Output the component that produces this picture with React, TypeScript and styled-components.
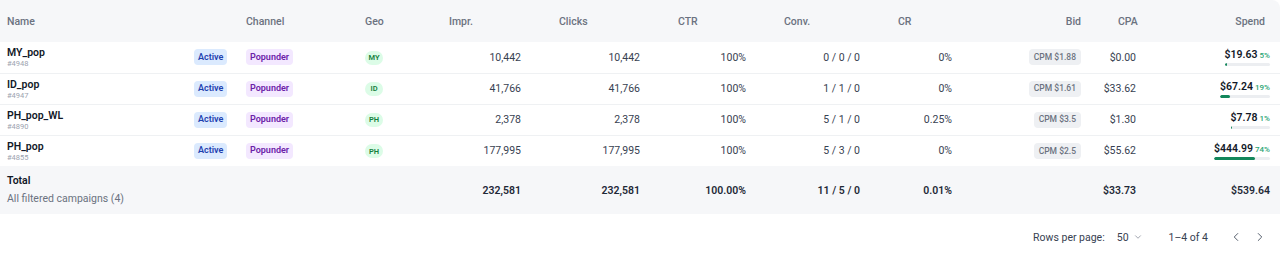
import React from "react";
import styled, { createGlobalStyle } from "styled-components";
import { ChevronDown, ChevronLeft, ChevronRight } from "lucide-react";

const Global = createGlobalStyle`
  html, body { margin: 0; padding: 0; background: #ffffff; }
  body { font-family: Roboto, "Noto Sans", Arial, sans-serif; color: #1f2937; }
  * { box-sizing: border-box; }
`;

const Card = styled.div`
  width: 1280px;
  background: #ffffff;
  border-top-right-radius: 8px;
  overflow: hidden;
`;

const Table = styled.table`
  width: 1280px;
  table-layout: fixed;
  border-collapse: collapse;
`;

const HeadRow = styled.tr`
  height: 42px;
  background: #f6f7f9;
`;

const Th = styled.th<{ $align?: string; $pl?: number; $pr?: number }>`
  text-align: ${(p) => p.$align || "left"};
  padding: 0 ${(p) => p.$pr ?? 19}px 0 ${(p) => p.$pl ?? 19}px;
  font-size: 10.5px;
  font-weight: 500;
  color: #6b7280;
  white-space: nowrap;
`;

const BodyRow = styled.tr`
  height: 31px;
  border-bottom: 1px solid #eff1f3;
  &:last-child { border-bottom: none; }
`;

const Td = styled.td<{ $align?: string; $pl?: number; $pr?: number; $bold?: boolean }>`
  text-align: ${(p) => p.$align || "right"};
  padding: 0 ${(p) => p.$pr ?? 19}px 0 ${(p) => p.$pl ?? 19}px;
  font-size: 10.5px;
  font-weight: ${(p) => (p.$bold ? 600 : 400)};
  color: ${(p) => (p.$bold ? "#1f2937" : "#374151")};
  white-space: nowrap;
  vertical-align: middle;
`;

const NameText = styled.div`
  font-size: 10.5px;
  font-weight: 600;
  color: #111827;
  line-height: 12px;
  margin-top: 1px;
`;

const IdText = styled.div`
  font-size: 7.5px;
  color: #9ca3af;
  line-height: 9px;
`;

const Badge = styled.span<{ $bg: string; $fg: string; $size?: number; $weight?: number; $px?: number }>`
  display: inline-flex;
  align-items: center;
  height: 16px;
  padding: 0 ${(p) => p.$px ?? 4}px;
  border-radius: 4px;
  background: ${(p) => p.$bg};
  color: ${(p) => p.$fg};
  font-size: ${(p) => p.$size ?? 9}px;
  font-weight: ${(p) => p.$weight ?? 600};
  line-height: 1;
`;

const GeoBadge = styled.span`
  display: inline-flex;
  align-items: center;
  justify-content: center;
  min-width: 18px;
  height: 14px;
  padding: 0 3px;
  border-radius: 7px;
  background: #dcfce7;
  color: #16803d;
  font-size: 7.5px;
  font-weight: 600;
`;

const SpendBox = styled.div`
  display: inline-flex;
  flex-direction: column;
  align-items: stretch;
  gap: 2px;
  vertical-align: middle;
`;

const SpendLine = styled.div`
  display: flex;
  align-items: baseline;
  justify-content: flex-end;
  gap: 2px;
`;

const SpendValue = styled.span`
  font-size: 10.5px;
  font-weight: 600;
  color: #111827;
`;

const SpendPct = styled.span`
  font-size: 8px;
  font-weight: 500;
  color: #2aa574;
`;

const Track = styled.div`
  height: 3px;
  border-radius: 2px;
  background: #eceef1;
  overflow: hidden;
`;

const Fill = styled.div`
  height: 100%;
  border-radius: 2px;
  background: #13875b;
`;

const TotalRow = styled.tr`
  height: 48px;
  background: #f6f7f9;
`;

const TotalTitle = styled.div`
  font-size: 10.5px;
  font-weight: 600;
  color: #111827;
  line-height: 14px;
`;

const TotalSub = styled.div`
  font-size: 10.5px;
  color: #6b7280;
  line-height: 16px;
  margin-top: 3px;
`;

const Footer = styled.div`
  height: 46px;
  display: flex;
  align-items: center;
  justify-content: flex-end;
  padding-right: 13px;
  font-size: 10.5px;
  color: #374151;
`;

const Select = styled.div`
  display: flex;
  align-items: center;
  gap: 4px;
  margin-left: 12px;
  color: #374151;
`;

const Range = styled.span`
  margin-left: 26px;
`;

const IconBtn = styled.button`
  border: none;
  background: transparent;
  padding: 0;
  display: flex;
  align-items: center;
  color: #4b5563;
  margin-left: 10px;
  width: 14px;
  cursor: pointer;
  &:first-of-type { margin-left: 21px; }
`;

type Row = {
  name: string;
  id: string;
  geo: string;
  impr: string;
  clicks: string;
  ctr: string;
  conv: string;
  cr: string;
  bid: string;
  cpa: string;
  spend: string;
  pct: number;
};

const rows: Row[] = [
  { name: "MY_pop", id: "#4948", geo: "MY", impr: "10,442", clicks: "10,442", ctr: "100%", conv: "0 / 0 / 0", cr: "0%", bid: "CPM $1.88", cpa: "$0.00", spend: "$19.63", pct: 5 },
  { name: "ID_pop", id: "#4947", geo: "ID", impr: "41,766", clicks: "41,766", ctr: "100%", conv: "1 / 1 / 0", cr: "0%", bid: "CPM $1.61", cpa: "$33.62", spend: "$67.24", pct: 19 },
  { name: "PH_pop_WL", id: "#4890", geo: "PH", impr: "2,378", clicks: "2,378", ctr: "100%", conv: "5 / 1 / 0", cr: "0.25%", bid: "CPM $3.5", cpa: "$1.30", spend: "$7.78", pct: 1 },
  { name: "PH_pop", id: "#4855", geo: "PH", impr: "177,995", clicks: "177,995", ctr: "100%", conv: "5 / 3 / 0", cr: "0%", bid: "CPM $2.5", cpa: "$55.62", spend: "$444.99", pct: 74 },
];

const widths = [187, 52, 119, 72, 110, 119, 106, 114, 92, 129, 55, 125];

export default function App() {
  return (
    <>
      <Global />
      <Card>
        <Table>
          <colgroup>
            {widths.map((w, i) => (
              <col key={i} style={{ width: w }} />
            ))}
          </colgroup>
          <thead>
            <HeadRow>
              <Th $pl={7}>Name</Th>
              <Th $pl={7}></Th>
              <Th $pl={7}>Channel</Th>
              <Th $pl={7}>Geo</Th>
              <Th>Impr.</Th>
              <Th>Clicks</Th>
              <Th>CTR</Th>
              <Th>Conv.</Th>
              <Th>CR</Th>
              <Th $align="right">Bid</Th>
              <Th $pl={18} $pr={0}>CPA</Th>
              <Th $align="right" $pr={15}>Spend</Th>
            </HeadRow>
          </thead>
          <tbody>
            {rows.map((r) => (
              <BodyRow key={r.id}>
                <Td $align="left" $pl={7}>
                  <NameText>{r.name}</NameText>
                  <IdText>{r.id}</IdText>
                </Td>
                <Td $align="left" $pl={7} $pr={0}>
                  <Badge $bg="#dbeafe" $fg="#1e40af">Active</Badge>
                </Td>
                <Td $align="left" $pl={7}>
                  <Badge $bg="#f3e8ff" $fg="#6b21a8">Popunder</Badge>
                </Td>
                <Td $align="left" $pl={7}>
                  <GeoBadge>{r.geo}</GeoBadge>
                </Td>
                <Td>{r.impr}</Td>
                <Td>{r.clicks}</Td>
                <Td>{r.ctr}</Td>
                <Td>{r.conv}</Td>
                <Td>{r.cr}</Td>
                <Td>
                  <Badge $bg="#eef0f3" $fg="#6b7280" $weight={500} $size={8.5} $px={5}>
                    {r.bid}
                  </Badge>
                </Td>
                <Td $pl={0}>{r.cpa}</Td>
                <Td $pr={10}>
                  <SpendBox>
                    <SpendLine>
                      <SpendValue>{r.spend}</SpendValue>
                      <SpendPct>{r.pct}%</SpendPct>
                    </SpendLine>
                    <Track>
                      <Fill style={{ width: `${Math.max(r.pct, 3)}%` }} />
                    </Track>
                  </SpendBox>
                </Td>
              </BodyRow>
            ))}
          </tbody>
          <tfoot>
            <TotalRow>
              <Td $align="left" $pl={7} colSpan={4}>
                <TotalTitle>Total</TotalTitle>
                <TotalSub>All filtered campaigns (4)</TotalSub>
              </Td>
              <Td $bold>232,581</Td>
              <Td $bold>232,581</Td>
              <Td $bold>100.00%</Td>
              <Td $bold>11 / 5 / 0</Td>
              <Td $bold>0.01%</Td>
              <Td></Td>
              <Td $bold $pl={0}>$33.73</Td>
              <Td $bold $pr={10}>$539.64</Td>
            </TotalRow>
          </tfoot>
        </Table>
        <Footer>
          <span>Rows per page:</span>
          <Select>
            <span>50</span>
            <ChevronDown size={10} strokeWidth={1.5} color="#6b7280" />
          </Select>
          <Range>1–4 of 4</Range>
          <IconBtn aria-label="previous">
            <ChevronLeft size={14} strokeWidth={1.6} />
          </IconBtn>
          <IconBtn aria-label="next">
            <ChevronRight size={14} strokeWidth={1.6} />
          </IconBtn>
        </Footer>
      </Card>
    </>
  );
}
